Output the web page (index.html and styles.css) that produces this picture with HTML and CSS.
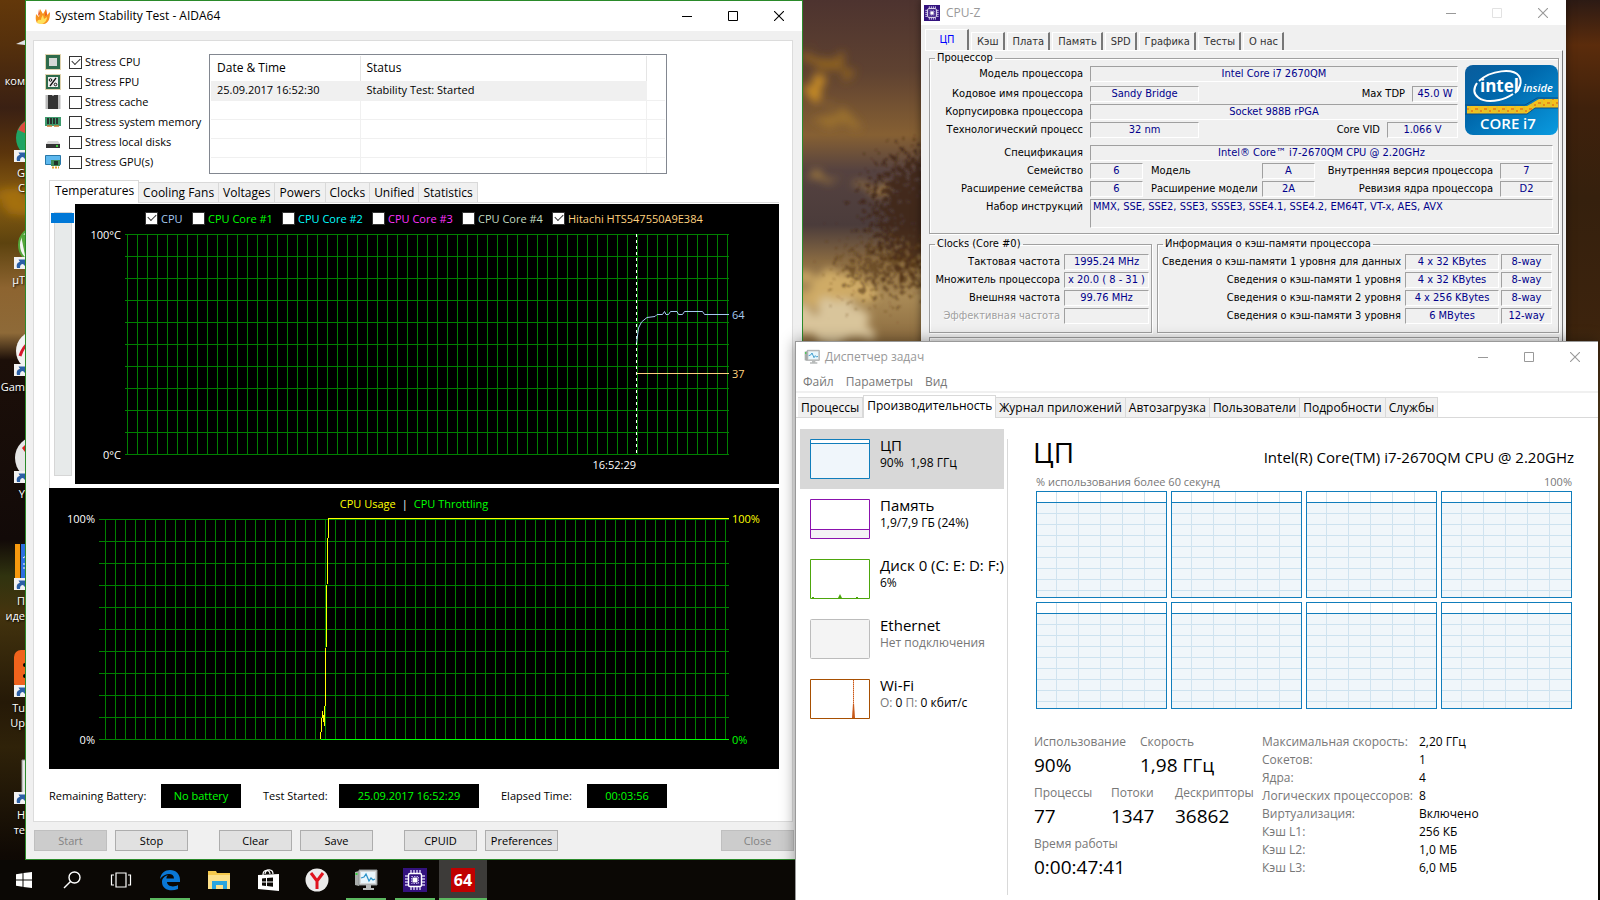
FILE: index.html
```html
<!DOCTYPE html>
<html lang="ru">

<head>
     <meta charset="UTF-8">
     <meta name="viewport" content="width=device-width, initial-scale=1.0">
     <title>Desktop</title>
     <link rel="stylesheet" href="styles.css">
</head>

<body>
     <svg width="0" height="0" class="defs">
          <symbol id="minimize" viewBox="0 0 10 10"><path d="M0 5.5h10" stroke="currentColor" shape-rendering="crispEdges"/></symbol>
          <symbol id="maximize" viewBox="0 0 10 10"><path d="M.5.5h9v9h-9z" fill="none" stroke="currentColor"/></symbol>
          <symbol id="close" viewBox="0 0 10 10"><path d="M0 0l10 10M10 0L0 10" stroke="currentColor" stroke-width="1.1"/></symbol>
          <symbol id="shortcut" viewBox="0 0 12 12">
               <path d="M0 0h12v12H0z" fill="#f2f2f2"/>
               <path d="M3 11c-1-4 1-6 3-6L4.500 2.500h6.500V9L9 7c-2 0-3 1-3 4z" fill="#2b5fa5"/>
          </symbol>
          <symbol id="chip" viewBox="0 0 24 24">
               <path d="M0 0h24v24H0z" fill="#33127e"/>
               <path d="M8 2v3M11 2v3M14 2v3M17 2v3M8 19v3M11 19v3M14 19v3M17 19v3M2 8h3M2 11h3M2 14h3M2 17h3M19 8h3M19 11h3M19 14h3M19 17h3" stroke="#cfc4ee" stroke-width="1.500"/>
               <rect x="5.500" y="5.500" width="13" height="13" rx="1.500" fill="#33127e" stroke="#fff" stroke-width="1.400"/>
               <path d="M8.500 8.500h7v7h-7z" fill="none" stroke="#b9a9e6" stroke-dasharray="1.500 1"/>
               <path d="M9.500 9.500h5v5h-5z" fill="#fff"/>
          </symbol>
          <symbol id="monitor" viewBox="0 0 24 24">
               <path d="M1 4l4-1v15l-4-1z" fill="#a9adab"/>
               <path d="M1.500 6h2" stroke="#35d03c" stroke-width="2"/>
               <path d="M5 2h18v15H5z" fill="#d5d8d8" stroke="#8c9192"/>
               <path d="M7 4h14v11H7z" fill="#e9f7fd"/>
               <path d="M7 10l3-1 2-3 3 7 2-3 2 2 2-1" fill="none" stroke="#2c93c9" stroke-width="1.300"/>
               <path d="M12 17h5v3h3v2H9v-2h3z" fill="#b8bbbb"/>
          </symbol>
     </svg>

     <div class="desktop">
          <svg class="wallpaper" viewBox="0 0 1600 900" preserveAspectRatio="none" aria-hidden="true">
               <defs>
                    <linearGradient id="skyLeft" x2="0" y2="1">
                         <stop offset="0" stop-color="#63380a"/>
                         <stop offset=".05" stop-color="#55300c"/>
                         <stop offset=".12" stop-color="#3a2013"/>
                         <stop offset=".17" stop-color="#5b350c"/>
                         <stop offset=".22" stop-color="#8a5e10"/>
                         <stop offset=".27" stop-color="#5d430f"/>
                         <stop offset=".32" stop-color="#8d6430"/>
                         <stop offset=".37" stop-color="#8e6a38"/>
                         <stop offset=".4" stop-color="#1c0f09"/>
                         <stop offset=".6" stop-color="#120a08"/>
                         <stop offset=".64" stop-color="#30330f"/>
                         <stop offset=".68" stop-color="#44340e"/>
                         <stop offset=".78" stop-color="#251907"/>
                         <stop offset=".83" stop-color="#2f2209"/>
                         <stop offset=".95" stop-color="#0f0904"/>
                         <stop offset="1" stop-color="#080503"/>
                    </linearGradient>
                    <linearGradient id="skyMiddle" x2="0" y2="1">
                         <stop offset="0" stop-color="#4d332f"/>
                         <stop offset=".08" stop-color="#5f4231"/>
                         <stop offset=".15" stop-color="#866033"/>
                         <stop offset=".19" stop-color="#554240"/>
                         <stop offset=".25" stop-color="#4b3c3b"/>
                         <stop offset=".29" stop-color="#8a6b42"/>
                         <stop offset=".33" stop-color="#a98a56"/>
                         <stop offset=".38" stop-color="#8a6a3e"/>
                         <stop offset=".6" stop-color="#20160a"/>
                         <stop offset="1" stop-color="#080503"/>
                    </linearGradient>
                    <linearGradient id="skyRight" x2="0" y2="1">
                         <stop offset="0" stop-color="#2c1a14"/>
                         <stop offset=".05" stop-color="#5b2c0c"/>
                         <stop offset=".12" stop-color="#3f210c"/>
                         <stop offset=".22" stop-color="#35200d"/>
                         <stop offset=".36" stop-color="#3c230d"/>
                         <stop offset=".5" stop-color="#5c4520"/>
                         <stop offset=".7" stop-color="#2a1c0c"/>
                         <stop offset="1" stop-color="#080503"/>
                    </linearGradient>
                    <filter id="cloud" x="-20%" y="-20%" width="140%" height="140%">
                         <feTurbulence type="fractalNoise" baseFrequency=".05" numOctaves="4" seed="4"/>
                         <feDisplacementMap in="SourceGraphic" scale="36"/>
                         <feGaussianBlur stdDeviation="4"/>
                    </filter>
                    <filter id="leaves" x="-40%" y="-40%" width="180%" height="180%">
                         <feTurbulence type="fractalNoise" baseFrequency=".18" numOctaves="4" seed="8" result="noise"/>
                         <feDisplacementMap in="SourceGraphic" in2="noise" scale="120" xChannelSelector="R" yChannelSelector="G"/>
                         <feGaussianBlur stdDeviation=".8"/>
                    </filter>
               </defs>
               <rect width="400" height="900" fill="url(#skyLeft)"/>
               <rect x="400" width="900" height="900" fill="url(#skyMiddle)"/>
               <rect x="1300" width="300" height="900" fill="url(#skyRight)"/>
               <g filter="url(#cloud)">
                    <ellipse cx="830" cy="62" rx="22" ry="10" fill="#8c6024"/>
                    <ellipse cx="818" cy="88" rx="14" ry="12" fill="#c58a25"/>
                    <ellipse cx="832" cy="118" rx="22" ry="8" fill="#9a702f"/>
                    <ellipse cx="872" cy="186" rx="18" ry="3" fill="#c39443"/>
                    <ellipse cx="820" cy="176" rx="18" ry="3" fill="#a37b3c"/>
                    <ellipse cx="832" cy="288" rx="40" ry="16" fill="#cfab66"/>
                    <ellipse cx="832" cy="322" rx="40" ry="20" fill="#d9c59b"/>
                    <ellipse cx="14" cy="200" rx="14" ry="12" fill="#a4700f"/>
               </g>
               <g filter="url(#leaves)">
                    <ellipse cx="918" cy="212" rx="40" ry="56" fill="#3c2210" opacity=".75"/>
                    <ellipse cx="890" cy="268" rx="44" ry="16" fill="#553516" opacity=".6"/>
               </g>
          </svg>

          <div class="shortcuts">
               <a href="#" class="shortcut">
                    <svg viewBox="0 0 48 42"><path d="M16 31l9-4v5z" fill="#dfe3e6"/></svg>
                    <span><br>ком</span>
               </a>
               <a href="#" class="shortcut">
                    <svg viewBox="0 0 48 42"><circle cx="36" cy="18" r="20" fill="#1fa463"/><path d="M18 10a20 20 0 0 1 18-12v20z" fill="#dd4b3e"/><use href="#shortcut" x="14" y="30" width="12" height="12"/></svg>
                    <span>G<br>C</span>
               </a>
               <a href="#" class="shortcut">
                    <svg viewBox="0 0 48 42"><circle cx="37" cy="18" r="18" fill="#f4f4f4" stroke="#55a53a" stroke-width="2"/><path d="M23 8l4 20" stroke="#55a53a" stroke-width="4"/><use href="#shortcut" x="14" y="30" width="12" height="12"/></svg>
                    <span>µT</span>
               </a>
               <a href="#" class="shortcut">
                    <svg viewBox="0 0 48 42"><circle cx="36" cy="17" r="20" fill="#f2f2f2"/><path d="M20 22c2-6 4-10 8-12" stroke="#d6182c" stroke-width="3" fill="none"/><use href="#shortcut" x="14" y="30" width="12" height="12"/></svg>
                    <span>Gam</span>
               </a>
               <a href="#" class="shortcut">
                    <svg viewBox="0 0 48 42"><circle cx="37" cy="17" r="22" fill="#e6e6e6"/><path d="M22 7l3-3v7z" fill="#d81e1e"/><use href="#shortcut" x="14" y="30" width="12" height="12"/></svg>
                    <span>Y</span>
               </a>
               <a href="#" class="shortcut">
                    <svg viewBox="0 0 48 42"><path d="M15-4h5v34h-5z" fill="#f79a0e"/><path d="M21-4h10v34H21z" fill="#2d6fe0"/><path d="M23 10l3-2M23 16h3M23 20h3" stroke="#fff"/><use href="#shortcut" x="14" y="30" width="12" height="12"/></svg>
                    <span>П<br>иде</span>
               </a>
               <a href="#" class="shortcut">
                    <svg viewBox="0 0 48 42"><rect x="14" y="-5" width="40" height="40" rx="7" fill="#f0631c"/><circle cx="25" cy="10" r="2"/><circle cx="25" cy="21" r="2"/><use href="#shortcut" x="14" y="30" width="12" height="12"/></svg>
                    <span>Tu<br>Up</span>
               </a>
               <a href="#" class="shortcut">
                    <svg viewBox="0 0 48 42"><path d="M22-2h20v34H22z" fill="#e5e5e5" stroke="#999"/><use href="#shortcut" x="14" y="30" width="12" height="12"/></svg>
                    <span>Н<br>те</span>
               </a>
          </div>

          <!-- AIDA64 -->
          <div class="window aida" lang="en">
               <div class="titlebar">
                    <svg class="titleIcon" viewBox="0 0 16 16">
                         <path d="M2 15C0 11 1 8 1 6l3 3 1-8 3 5 3-5 1 6 3-3c0 6-1 11-6 12z" fill="#f7931e"/>
                         <path d="M2 15c0-3 2-4 4-3 0-2 1-4 2-5l1 4 3-2c0 4-3 7-6 7z" fill="#ffe05a"/>
                         <path d="M4 1l1 5-2 2zM11 1l1 6-2 1z" fill="#e8541e"/>
                    </svg>
                    <h1>System Stability Test - AIDA64</h1>
                    <div class="caption">
                         <button aria-label="Minimize"><svg><use href="#minimize"/></svg></button>
                         <button aria-label="Maximize"><svg><use href="#maximize"/></svg></button>
                         <button aria-label="Close window"><svg><use href="#close"/></svg></button>
                    </div>
               </div>
               <div class="panel">
                    <div class="topRow">
                         <div class="stressList">
                              <label>
                                   <svg viewBox="0 0 16 16"><path d="M.5.5h15v15H.5z" fill="none" stroke="#c0a860" stroke-dasharray="1 1"/><path d="M1 1h14v14H1z" fill="#2e6b4b"/><path d="M4 4h8v8H4z" fill="#d5d8d5"/></svg>
                                   <input type="checkbox" checked>Stress CPU
                              </label>
                              <label>
                                   <svg viewBox="0 0 16 16"><path d="M.5.5h15v15H.5z" fill="none" stroke="#c0a860" stroke-dasharray="1 1"/><path d="M1 1h14v14H1z" fill="#2e6b4b"/><path d="M3 3h10v10H3z" fill="#eee"/><path d="M11 4l-6 8" stroke="#111" stroke-width="1.300"/><circle cx="5.500" cy="6" r="1.300" fill="none" stroke="#111"/><circle cx="10.500" cy="10.500" r="1.300" fill="none" stroke="#111"/></svg>
                                   <input type="checkbox">Stress FPU
                              </label>
                              <label>
                                   <svg viewBox="0 0 16 16"><path d="M2 1.500v14M14 1.500v14" stroke="#777" stroke-width="3" stroke-dasharray="1 1"/><path d="M3 1h4l1 1 1-1h4v14H3z" fill="#333"/></svg>
                                   <input type="checkbox">Stress cache
                              </label>
                              <label>
                                   <svg viewBox="0 0 16 16"><path d="M0 3h16v9H0z" fill="#3f9a6d"/><path d="M2 4h2v6H2zM5 4h2v6H5zM8 4h2v6H8zM11 4h2v6h-2z" fill="#29332e"/><path d="M2 12h5M9 12h5" stroke="#c97b35" stroke-width="1.500"/></svg>
                                   <input type="checkbox">Stress system memory
                              </label>
                              <label>
                                   <svg viewBox="0 0 16 16"><path d="M3 7h10l2 3H1z" fill="#d6d6d6"/><path d="M1 10h14v4H1z" fill="#333"/><circle cx="12" cy="12" r="1" fill="#4f4"/></svg>
                                   <input type="checkbox">Stress local disks
                              </label>
                              <label>
                                   <svg viewBox="0 0 16 16"><path d="M.5 1.500h15v9H.5z" fill="#5db8ee" stroke="#2877a8"/><path d="M6 6h9v6H6z" fill="#3d8a5a"/><path d="M9 7h4v4H9z" fill="#1f3328"/><path d="M7 13.500h7" stroke="#e0a030" stroke-width="2" stroke-dasharray="2 1"/></svg>
                                   <input type="checkbox">Stress GPU(s)
                              </label>
                         </div>
                         <div class="logBox">
                              <table class="log">
                                   <thead>
                                        <tr><th class="date">Date &amp; Time</th><th class="state">Status</th><th></th></tr>
                                   </thead>
                                   <tbody>
                                        <tr class="selected"><td>25.09.2017 16:52:30</td><td>Stability Test: Started</td><td></td></tr>
                                        <tr><td></td><td></td><td></td></tr>
                                        <tr><td></td><td></td><td></td></tr>
                                        <tr><td></td><td></td><td></td></tr>
                                        <tr><td></td><td></td><td></td></tr>
                                   </tbody>
                              </table>
                         </div>
                    </div>

                    <div class="tabs">
                         <button class="tab active">Temperatures</button>
                         <button class="tab">Cooling Fans</button>
                         <button class="tab">Voltages</button>
                         <button class="tab">Powers</button>
                         <button class="tab">Clocks</button>
                         <button class="tab">Unified</button>
                         <button class="tab">Statistics</button>
                    </div>

                    <div class="pane">
                         <input class="scale" type="range" min="0" max="100" value="0" aria-label="Scale">
                         <div class="chart">
                              <div class="legend">
                                   <label class="c1"><input type="checkbox" checked>CPU</label>
                                   <label class="c2"><input type="checkbox">CPU Core #1</label>
                                   <label class="c3"><input type="checkbox">CPU Core #2</label>
                                   <label class="c4"><input type="checkbox">CPU Core #3</label>
                                   <label class="c5"><input type="checkbox">CPU Core #4</label>
                                   <label class="c6"><input type="checkbox" checked>Hitachi HTS547550A9E384</label>
                              </div>
                              <svg viewBox="0 0 704 256">
                                   <defs>
                                        <pattern id="tempGrid" x="52" y="6" width="10" height="22" patternUnits="userSpaceOnUse">
                                             <path d="M0 0h10v1H1v21H0z" fill="#008000"/>
                                        </pattern>
                                   </defs>
                                   <rect x="50" y="6" width="604" height="221" fill="url(#tempGrid)" shape-rendering="crispEdges"/>
                                   <path d="M561.500 6v220" stroke="#fff" stroke-dasharray="3 3"/>
                                   <polyline points="561.500,115 563.500,100 566.500,94 572,89.500 580,88.500 582,86.500 587.500,86.500 589.500,83.500 591,86.500 593.500,86.500 595.500,83.500 602,83.500 603.500,86.500 607.500,86.500 609.500,83.500 627.500,83.500 629.500,86.500 654,86.500" fill="none" stroke="#a6caf0"/>
                                   <path d="M562 145.500h92" stroke="#ffd27f"/>
                                   <text x="46" y="11" text-anchor="end">100°C</text>
                                   <text x="46" y="231" text-anchor="end">0°C</text>
                                   <text x="561" y="241" text-anchor="end">16:52:29</text>
                                   <text x="657" y="91" class="c1">64</text>
                                   <text x="657" y="150" class="c6">37</text>
                              </svg>
                         </div>
                    </div>

                    <div class="chart usage">
                         <p class="usageLegend"><span class="yellow">CPU Usage</span><span>|</span><span class="green">CPU Throttling</span></p>
                         <svg viewBox="0 0 730 259">
                              <defs>
                                   <pattern id="usageGrid" x="56" y="9" width="10" height="22" patternUnits="userSpaceOnUse">
                                        <path d="M0 0h10v1H1v21H0z" fill="#008000"/>
                                   </pattern>
                              </defs>
                              <rect x="50" y="9" width="630" height="221" fill="url(#usageGrid)" shape-rendering="crispEdges"/>
                              <path d="M272 229.500h408" stroke="#0f0"/>
                              <polyline points="271.500,229 273.500,201 275.500,216 276.500,177 277.500,101 278.500,49 279.500,8.500 680,8.500" fill="none" stroke="#ff0" shape-rendering="crispEdges"/>
                              <text x="46" y="13" text-anchor="end">100%</text>
                              <text x="46" y="234" text-anchor="end">0%</text>
                              <text x="683" y="13" class="yellow">100%</text>
                              <text x="683" y="234" class="green">0%</text>
                         </svg>
                    </div>

                    <div class="statusRow">
                         <span>Remaining Battery:</span>
                         <output>No battery</output>
                         <span>Test Started:</span>
                         <output>25.09.2017 16:52:29</output>
                         <span>Elapsed Time:</span>
                         <output>00:03:56</output>
                    </div>
               </div>
               <div class="buttons">
                    <button disabled>Start</button>
                    <button>Stop</button>
                    <button class="group">Clear</button>
                    <button>Save</button>
                    <button class="group">CPUID</button>
                    <button>Preferences</button>
                    <button class="last" disabled>Close</button>
               </div>
          </div>

          <!-- CPU-Z -->
          <div class="window cpuz">
               <div class="titlebar">
                    <svg class="titleIcon"><use href="#chip"/></svg>
                    <h1>CPU-Z</h1>
                    <div class="caption">
                         <button aria-label="Свернуть"><svg><use href="#minimize"/></svg></button>
                         <button aria-label="Развернуть" disabled><svg><use href="#maximize"/></svg></button>
                         <button aria-label="Закрыть"><svg><use href="#close"/></svg></button>
                    </div>
               </div>
               <div class="zTabs">
                    <button class="zTab active">ЦП</button>
                    <button class="zTab">Кэш</button>
                    <button class="zTab">Плата</button>
                    <button class="zTab">Память</button>
                    <button class="zTab">SPD</button>
                    <button class="zTab">Графика</button>
                    <button class="zTab">Тесты</button>
                    <button class="zTab">О нас</button>
               </div>
               <div class="zPage">
                    <fieldset class="processor">
                         <legend>Процессор</legend>
                         <div class="model">
                              <div class="modelRows">
                                   <div class="row"><span class="name">Модель процессора</span><span class="field grow">Intel Core i7 2670QM</span></div>
                                   <div class="row"><span class="name">Кодовое имя процессора</span><span class="field mid">Sandy Bridge</span><span class="name grow">Max TDP</span><span class="field tdp">45.0 W</span></div>
                                   <div class="row"><span class="name">Корпусировка процессора</span><span class="field grow">Socket 988B rPGA</span></div>
                                   <div class="row"><span class="name">Технологический процесс</span><span class="field mid">32 nm</span><span class="name grow">Core VID</span><span class="field vid">1.066 V</span></div>
                              </div>
                              <svg class="intel" viewBox="0 0 93 70">
                                   <defs>
                                        <linearGradient id="blue" x2="1" y2="1"><stop offset="0" stop-color="#0a5c9c"/><stop offset=".4" stop-color="#0068ac"/><stop offset="1" stop-color="#0a9be0"/></linearGradient>
                                        <pattern id="die" width="9" height="6" patternUnits="userSpaceOnUse"><path d="M0 0h9v6H0z" fill="#f5c21c"/><path d="M1 1h3v2H1zM6 3h2v2H6z" fill="#e58a1a"/><path d="M5 0v6M0 4h4" stroke="#b7bd4a" stroke-width=".6"/></pattern>
                                   </defs>
                                   <rect width="93" height="70" rx="8" fill="url(#blue)"/>
                                   <path d="M2 41h60l12-7h19v9H70l-8 6H2z" fill="url(#die)"/>
                                   <path d="M0 40h60l12-7h21M0 49h62l8-6h23" fill="none" stroke="#0a4f86"/>
                                   <path d="M14 16C26 5 48 3 54 11c4 6 0 14-4 17M12 18C4 30 16 39 34 35c6-1 11-4 14-6" fill="none" stroke="#fff" stroke-width="2"/>
                                   <text x="15" y="27" class="intelName">intel</text>
                                   <text x="58" y="27" class="intelInside">inside</text>
                                   <text x="15" y="64" class="intelCore">CORE</text>
                                   <text x="58" y="64" class="intelCore">i7</text>
                              </svg>
                         </div>
                         <div class="row"><span class="name">Спецификация</span><span class="field grow">Intel® Core™ i7-2670QM CPU @ 2.20GHz</span></div>
                         <div class="row"><span class="name">Семейство</span><span class="field num">6</span><span class="name left">Модель</span><span class="field num">A</span><span class="name grow">Внутренняя версия процессора</span><span class="field num">7</span></div>
                         <div class="row"><span class="name">Расширение семейства</span><span class="field num">6</span><span class="name left">Расширение модели</span><span class="field num">2A</span><span class="name grow">Ревизия ядра процессора</span><span class="field num">D2</span></div>
                         <div class="row"><span class="name">Набор инструкций</span><span class="field grow tall">MMX, SSE, SSE2, SSE3, SSSE3, SSE4.1, SSE4.2, EM64T, VT-x, AES, AVX</span></div>
                    </fieldset>
                    <div class="halves">
                         <fieldset class="clocks">
                              <legend>Clocks (Core #0)</legend>
                              <div class="row"><span class="name grow">Тактовая частота</span><span class="field">1995.24 MHz</span></div>
                              <div class="row"><span class="name grow">Множитель процессора</span><span class="field">x 20.0 ( 8 - 31 )</span></div>
                              <div class="row"><span class="name grow">Внешняя частота</span><span class="field">99.76 MHz</span></div>
                              <div class="row"><span class="name grow off">Эффективная частота</span><span class="field"></span></div>
                         </fieldset>
                         <fieldset class="cache">
                              <legend>Информация о кэш-памяти процессора</legend>
                              <div class="row"><span class="name grow">Сведения о кэш-памяти 1 уровня для данных</span><span class="field size">4 x 32 KBytes</span><span class="field way">8-way</span></div>
                              <div class="row"><span class="name grow">Сведения о кэш-памяти 1 уровня</span><span class="field size">4 x 32 KBytes</span><span class="field way">8-way</span></div>
                              <div class="row"><span class="name grow">Сведения о кэш-памяти 2 уровня</span><span class="field size">4 x 256 KBytes</span><span class="field way">8-way</span></div>
                              <div class="row"><span class="name grow">Сведения о кэш-памяти 3 уровня</span><span class="field size">6 MBytes</span><span class="field way">12-way</span></div>
                         </fieldset>
                    </div>
                    <fieldset class="footerBox"></fieldset>
               </div>
          </div>

          <!-- Task manager -->
          <div class="window taskmgr">
               <div class="titlebar">
                    <svg class="titleIcon"><use href="#monitor"/></svg>
                    <h1>Диспетчер задач</h1>
                    <div class="caption">
                         <button aria-label="Свернуть"><svg><use href="#minimize"/></svg></button>
                         <button aria-label="Развернуть"><svg><use href="#maximize"/></svg></button>
                         <button aria-label="Закрыть"><svg><use href="#close"/></svg></button>
                    </div>
               </div>
               <div class="menu">
                    <button>Файл</button>
                    <button>Параметры</button>
                    <button>Вид</button>
               </div>
               <div class="tabs">
                    <button class="tab">Процессы</button>
                    <button class="tab active">Производительность</button>
                    <button class="tab">Журнал приложений</button>
                    <button class="tab">Автозагрузка</button>
                    <button class="tab">Пользователи</button>
                    <button class="tab">Подробности</button>
                    <button class="tab">Службы</button>
               </div>
               <div class="perf">
                    <div class="devices">
                         <button class="device selected">
                              <svg viewBox="0 0 60 40"><path d="M.5.5h59v39H.5z" fill="#fff"/><path d="M.5 4.500h59v35H.5z" fill="#f0f6fb"/><path d="M.5.5h59v39H.5zM0 4.500h60" fill="none" stroke="#117dbb"/></svg>
                              <span><b>ЦП</b><small>90%&nbsp; 1,98 ГГц</small></span>
                         </button>
                         <button class="device">
                              <svg viewBox="0 0 60 40"><path d="M1 30h58v9H1z" fill="#f4f2f5"/><path d="M.5.5h59v39H.5zM0 30.500h60" fill="none" stroke="#8b12ae"/></svg>
                              <span><b>Память</b><small>1,9/7,9 ГБ (24%)</small></span>
                         </button>
                         <button class="device">
                              <svg viewBox="0 0 60 40"><path d="M28 39l2-4 2 4zM2 39v-1h2v1zM46 39v-1h2v1z" fill="#4da60c"/><path d="M.5.5h59v39H.5z" fill="none" stroke="#4da60c"/></svg>
                              <span><b>Диск 0 (C: E: D: F:)</b><small>6%</small></span>
                         </button>
                         <button class="device">
                              <svg viewBox="0 0 60 40"><rect x=".5" y=".5" width="59" height="39" rx="1" fill="#f4f4f4" stroke="#bcbcbc"/></svg>
                              <span><b>Ethernet</b><small class="gray">Нет подключения</small></span>
                         </button>
                         <button class="device">
                              <svg viewBox="0 0 60 40"><path d="M42 39l1-15h1l1 15z" fill="#c85a1a"/><path d="M43.500 1v24" stroke="#e8a07a"/><path d="M43.500 1v24" stroke="#c85a1a" stroke-dasharray="1 1"/><path d="M.5.5h59v39H.5z" fill="none" stroke="#a74f01"/></svg>
                              <span><b>Wi-Fi</b><small><i>О:</i> 0 <i>П:</i> 0 кбит/с</small></span>
                         </button>
                    </div>
                    <div class="details">
                         <div class="detailsHead">
                              <h2>ЦП</h2>
                              <p>Intel(R) Core(TM) i7-2670QM CPU @ 2.20GHz</p>
                         </div>
                         <div class="axis"><span>% использования более 60 секунд</span><span>100%</span></div>
                         <div class="cores">
                              <div class="core"></div>
                              <div class="core"></div>
                              <div class="core"></div>
                              <div class="core"></div>
                              <div class="core"></div>
                              <div class="core"></div>
                              <div class="core"></div>
                              <div class="core"></div>
                         </div>
                         <div class="stats">
                              <div class="bigStats">
                                   <div class="statLine two">
                                        <p><span>Использование</span><strong>90%</strong></p>
                                        <p><span>Скорость</span><strong>1,98 ГГц</strong></p>
                                   </div>
                                   <div class="statLine three">
                                        <p><span>Процессы</span><strong>77</strong></p>
                                        <p><span>Потоки</span><strong>1347</strong></p>
                                        <p><span>Дескрипторы</span><strong>36862</strong></p>
                                   </div>
                                   <div class="statLine">
                                        <p><span>Время работы</span><strong>0:00:47:41</strong></p>
                                   </div>
                              </div>
                              <dl>
                                   <dt>Максимальная скорость:</dt><dd>2,20 ГГц</dd>
                                   <dt>Сокетов:</dt><dd>1</dd>
                                   <dt>Ядра:</dt><dd>4</dd>
                                   <dt>Логических процессоров:</dt><dd>8</dd>
                                   <dt>Виртуализация:</dt><dd>Включено</dd>
                                   <dt>Кэш L1:</dt><dd>256 КБ</dd>
                                   <dt>Кэш L2:</dt><dd>1,0 МБ</dd>
                                   <dt>Кэш L3:</dt><dd>6,0 МБ</dd>
                              </dl>
                         </div>
                    </div>
               </div>
          </div>

          <div class="taskbar">
               <button class="narrow" aria-label="Пуск"><svg viewBox="0 0 24 24"><path d="M4 6.200l6.500-.9v6.200H4zM11.500 5.100L20 4v7.500h-8.500zM4 12.500h6.500v6.200L4 17.800zM11.500 12.500H20V20l-8.500-1.100z" fill="#fff"/></svg></button>
               <button class="narrow" aria-label="Поиск"><svg viewBox="0 0 24 24" fill="none" stroke="#fff" stroke-width="1.400"><circle cx="14.500" cy="9.500" r="5.500"/><path d="M10.500 13.500L4 20"/></svg></button>
               <button aria-label="Представление задач"><svg viewBox="0 0 24 24" fill="none" stroke="#fff" stroke-width="1.200"><path d="M7 5h10v14H7zM5 7H2.500v10H5M19 7h2.500v10H19"/></svg></button>
               <button aria-label="Edge" class="open"><svg viewBox="0 0 24 24"><path d="M2 11C3 5 7 2 12 2c6 0 10 4 10 10v2H9c0 4 6 6 11 3v4c-7 3-16 1-16-7 0-4 3-6 6-7-1 1-1.500 2-1.600 3.500H16c0-6-9-6-14 .5z" fill="#0a78d6"/></svg></button>
               <button aria-label="Проводник"><svg viewBox="0 0 24 24"><path d="M1 3h8l1 2h13v16H1z" fill="#f5c84c"/><path d="M1 7h22v14H1z" fill="#fde08a"/><path d="M5 21v-8h15v8h-4v-4H9v4z" fill="#2aa5e0"/></svg></button>
               <button aria-label="Магазин"><svg viewBox="0 0 24 24"><path d="M2 7l21-1v17L2 21z" fill="#fff"/><path d="M7 7c0-6 7-6 7-1M9 6c1-6 8-5 8 0" fill="none" stroke="#fff" stroke-width="1.200"/><path d="M6 10.500l4-.4v3.400H6zM11 10l6-.5v4h-6zM6 14.500h4V18l-4-.4zM11 14.500h6v4.200l-6-.6z" fill="#0c0906"/></svg></button>
               <button aria-label="Яндекс"><svg viewBox="0 0 24 24"><circle cx="12" cy="12" r="11.500" fill="#ebebeb"/><path d="M6 5l6 8 6-8M12 12v9" fill="none" stroke="#e0141e" stroke-width="3"/></svg></button>
               <button aria-label="Диспетчер задач" class="open"><svg><use href="#monitor"/></svg></button>
               <button aria-label="CPU-Z" class="open"><svg><use href="#chip"/></svg></button>
               <button aria-label="AIDA64" class="open current"><svg viewBox="0 0 24 24"><path d="M0 0h24v24H0z" fill="#c00000"/><text x="12" y="18" text-anchor="middle" class="badge64">64</text></svg></button>
          </div>
     </div>
</body>

</html>
```

FILE: styles.css
```css
* {
     margin: 0px;
     padding: 0px;
     box-sizing: border-box;
}

body {
     font-family: "Open Sans", "Noto Sans", sans-serif;
     font-size: 12px;
     line-height: 16px;
     color: #000;
}

button, input {
     font: inherit;
     color: inherit;
}

button {
     border: none;
     background: none;
     white-space: nowrap;
}

.defs {
     position: absolute;
}

.desktop {
     position: relative;
     width: 100%;
     height: 100vh;
     overflow: hidden;
     background-color: #120b06;
}

.wallpaper {
     display: block;
     width: 100%;
     height: 100%;
}

/* desktop shortcuts */
.shortcuts {
     position: absolute;
     left: 0px;
     top: 13px;
     display: grid;
     grid-template-columns: 25px;
     grid-auto-rows: 107px;
}

.shortcut {
     color: #fff;
     font-size: 11px;
     text-decoration: none;
     text-align: right;
     text-shadow: 1px 1px 2px #000;

     svg {
          display: block;
          width: 48px;
          height: 42px;
          margin-bottom: 3px;
          overflow: visible;
     }

     span {
          display: block;
          line-height: 15px;
     }
}

/* windows */
.window {
     position: absolute;
     display: flex;
     flex-direction: column;
}

.titlebar {
     display: flex;
     align-items: center;
     background-color: #fff;
     flex: none;

     h1 {
          flex: 1;
          font-size: 12px;
          font-weight: 400;
     }
}

.titleIcon {
     width: 16px;
     height: 16px;
     margin-right: 5px;
}

.caption {
     display: flex;
     height: 100%;

     button {
          width: 46px;
          display: flex;
          align-items: center;
          justify-content: center;
     }

     svg {
          width: 10px;
          height: 10px;
     }
}

.tabs {
     display: flex;
     align-items: flex-end;
}

.tab {
     height: 20px;
     padding: 0px 4px;
     background-color: #f0f0f0;
     border: 1px solid #d9d9d9;
     border-width: 1px 1px 0px 0px;

     &.active {
          height: 23px;
          padding-bottom: 2px;
          background-color: #fff;
          border-left-width: 1px;
          margin-bottom: -1px;
     }
}

input[type=checkbox] {
     appearance: none;
     position: relative;
     flex: none;
     width: 13px;
     height: 13px;
     border: 1px solid #333;
     background-color: #fff;
}

input[type=checkbox]:checked::after {
     content: "";
     position: absolute;
     left: 2px;
     top: 1px;
     width: 7px;
     height: 4px;
     border: solid #333;
     border-width: 0px 0px 1px 1px;
     transform: rotate(-45deg);
}

/* aida */
.aida {
     left: 25px;
     top: 0px;
     bottom: 40px;
     width: 778px;
     background-color: #f0f0f0;
     border: 1px solid #2a8a2a;

     .titlebar {
          height: 30px;
          padding-left: 9px;
     }

     .titleIcon {
          margin-right: 4px;
     }

     .panel {
          flex: 1;
          margin: 9px 9px 0px 7px;
          padding-left: 15px;
          background-color: #fff;
          border: 1px solid #dcdcdc;
     }
}

.topRow {
     display: flex;
     margin-left: -4px;
     padding-top: 11px;
}

.stressList {
     width: 164px;
     font-size: 11px;

     label {
          display: flex;
          align-items: center;
          height: 20px;
          white-space: nowrap;
     }

     svg {
          flex: none;
          width: 16px;
          height: 16px;
          margin-right: 8px;
     }

     input {
          margin-right: 3px;
     }
}

.logBox {
     width: 458px;
     height: 120px;
     margin-top: 2px;
     padding: 1px;
     border: 1px solid #828790;
     overflow: hidden;
}

.log {
     width: 100%;
     table-layout: fixed;
     border-collapse: collapse;

     th {
          height: 25px;
          padding: 0px 0px 2px 6px;
          text-align: left;
          font-weight: 400;
          border-right: 1px solid #e5e5e5;
     }

     .date {
          width: 149px;
     }

     .state {
          width: 286px;
     }

     td {
          height: 19px;
          padding-left: 6px;
          font-size: 11px;
          line-height: 18px;
          border-right: 1px solid #f0f0f0;
          border-bottom: 1px solid #f0f0f0;
     }

     th:last-child, td:last-child {
          border-right: none;
     }

     .selected td:not(:last-child) {
          background-color: #f0f0f0;
     }
}

.aida .tabs {
     margin-top: 6px;
     height: 22px;

     .active {
          padding-left: 5px;
     }
}

.pane {
     display: flex;
     width: 730px;
     height: 286px;
     padding: 1px 0px 4px 1px;
     border: 1px solid #dcdcdc;
     border-width: 1px 0px 0px 1px;
}

.scale {
     appearance: none;
     writing-mode: vertical-lr;
     width: 24px;
     height: 264px;
     margin: 8px 0px 0px 0px;
     background: none;

     &::-webkit-slider-runnable-track {
          width: 18px;
          background-color: #e7eaea;
          border: 1px solid #d6d6d6;
     }

     &::-webkit-slider-thumb {
          appearance: none;
          width: 23px;
          height: 10px;
          margin-left: -4px;
          background-color: #0078d7;
     }
}

.chart {
     flex: 1;
     background-color: #000;
     color: #fff;

     svg {
          display: block;
          width: 100%;
          height: auto;
     }

     text {
          fill: currentColor;
          font-size: 11px;
     }
}

.legend {
     display: grid;
     grid-template-columns: 47px repeat(4, 90px) auto;
     height: 24px;
     padding: 8px 0px 0px 70px;
     font-size: 11px;

     label {
          display: flex;
          align-items: center;
          gap: 3px;
          height: 13px;
          white-space: nowrap;
     }
}

.c1 { color: #a6caf0; }
.c2 { color: #00ff00; }
.c3 { color: #00ffff; }
.c4 { color: #ff33ff; }
.c5 { color: #c0dcc0; }
.c6 { color: #ffd27f; }
.yellow { color: #ffff00; }
.green { color: #00ff00; }

.usage {
     width: 730px;
}

.usageLegend {
     display: flex;
     justify-content: center;
     gap: 6px;
     height: 22px;
     padding-top: 8px;
     font-size: 11px;
}

.statusRow {
     display: grid;
     grid-template-columns: 112px 80px 98px 140px 108px 80px;
     align-items: center;
     margin-top: 15px;
     font-size: 11px;

     output {
          height: 24px;
          background-color: #000;
          color: #00ff00;
          line-height: 24px;
          text-align: center;
     }

     span:not(:first-child) {
          padding-left: 22px;
     }
}

.buttons {
     display: flex;
     gap: 8px;
     margin: 8px;
     font-size: 11px;

     button {
          width: 73px;
          height: 21px;
          background-color: #e1e1e1;
          border: 1px solid #adadad;
     }

     button:disabled {
          color: #838383;
          background-color: #cccccc;
          border-color: #bfbfbf;
     }

     .group {
          margin-left: 23px;
     }

     .last {
          margin-left: auto;
     }
}

/* cpu-z */
.cpuz {
     left: 921px;
     top: 0px;
     width: 645px;
     height: 400px;
     background-color: #f0f0f0;
     box-shadow: 0px 0px 8px rgba(0, 0, 0, 0.5);
     font-family: "DejaVu Sans Condensed", "Open Sans", sans-serif;
     font-size: 11px;
     line-height: 14px;

     .titlebar {
          height: 25px;
          padding-left: 3px;
          color: #999;
     }

     h1 {
          font-family: "Open Sans", sans-serif;
     }

     .titleIcon {
          margin-right: 6px;
     }

     .caption button:disabled {
          color: #e2e2e2;
     }
}

.zTabs {
     display: flex;
     align-items: flex-end;
     gap: 2px;
     height: 24px;
     margin-top: 1px;
     padding-left: 4px;
}

.zTab {
     height: 18px;
     padding: 0px 4px 0px 5px;
     color: #333;
     border: 1px solid #fff;
     border-bottom: none;
     border-right: 2px solid #777;

     &.active {
          width: 44px;
          height: 21px;
          color: #0000ff;
     }
}

.zPage {
     flex: 1;
     margin: 0px 3px 0px 4px;
     padding: 0px 3px 0px 4px;
     border-top: 1px solid #fff;
     border-right: 1px solid #777;

     fieldset {
          border: 1px solid #a0a0a0;
          box-shadow: 1px 1px 0px #fff, inset 1px 1px 0px #fff;
          min-width: 0px;
     }

     legend {
          margin-left: 5px;
          padding: 0px 2px;
     }
}

.row {
     display: flex;
     height: 18px;
}

.name {
     text-align: right;
     white-space: nowrap;
     padding: 1px 7px 0px 0px;

     &.off {
          color: #a0a0a0;
          text-shadow: 1px 1px 0px #fff;
     }
}

.processor .row > .name:first-child {
     width: 160px;
}

.processor .left {
     width: 119px;
     padding-left: 8px;
     text-align: left;
}

.name.grow, .field.grow {
     flex: 1;
}

.field {
     height: 16px;
     color: #00008b;
     text-align: center;
     white-space: nowrap;
     border: 1px solid #a0a0a0;
     border-right-color: #fff;
     border-bottom-color: #fff;
}

.processor {
     height: 183px;
     padding-right: 5px;

     .mid { width: 109px; }
     .tdp { width: 46px; }
     .vid { width: 71px; }
     .num { width: 53px; }
     .tall {
          height: 29px;
          padding-left: 2px;
          text-align: left;
     }
}

.model {
     display: flex;
     height: 80px;
     margin-right: -5px;

     .modelRows {
          flex: 1;
          padding-top: 1px;
     }

     .row:first-child {
          height: 20px;
     }
}

.intel {
     width: 93px;
     height: 70px;
     margin-left: 7px;

     text {
          fill: #fff;
     }
}

.intelName {
     font: 700 17px "Open Sans", sans-serif;
}

.intelInside {
     font: italic 600 11px "Open Sans", sans-serif;
}

.intelCore {
     font: 600 15px "Open Sans", sans-serif;
}

.halves {
     display: flex;
     gap: 5px;
     margin-top: 3px;

     fieldset {
          height: 96px;
          padding-top: 3px;
     }

     .name {
          padding-right: 4px;
     }
}

.clocks {
     width: 223px;
     padding-right: 2px;

     .field { width: 85px; }
}

.cache {
     flex: 1;
     padding-right: 6px;

     .size { width: 94px; }
     .way { width: 51px; margin-left: 2px; }
}

.footerBox {
     height: 40px;
     margin-top: 4px;
}

/* task manager */
.taskmgr {
     left: 795px;
     right: 2px;
     top: 341px;
     bottom: 0px;
     background-color: #fff;
     border: 1px solid #999;
     border-right: none;
     border-bottom: none;
     box-shadow: 0px 0px 14px rgba(0, 0, 0, 0.4);

     .titlebar {
          height: 30px;
          padding-left: 8px;
          color: #999;
     }

     .tabs {
          height: 23px;
          padding-left: 2px;
          margin-top: 2px;
          border-bottom: 1px solid #d9d9d9;
     }

     .tab {
          padding-left: 3px;
          padding-right: 3px;
     }
}

.menu {
     display: flex;
     gap: 12px;
     padding: 2px 0px 1px 7px;
     height: 21px;
     color: #777;
     border-bottom: 2px solid #f0f0f0;
}

.perf {
     flex: 1;
     display: flex;
     padding: 11px 26px 5px 4px;
     min-height: 0px;
}

.devices {
     flex: none;
     width: 204px;
}

.device {
     display: flex;
     width: 100%;
     height: 60px;
     padding: 10px 0px 0px 10px;
     gap: 10px;
     text-align: left;

     &.selected {
          background-color: #d8d8d8;
     }

     svg {
          flex: none;
          width: 60px;
          height: 40px;
     }

     span {
          margin-top: -2px;
     }

     b {
          display: block;
          font-size: 15px;
          font-weight: 400;
          line-height: 16px;
     }

     small {
          display: block;
          font-size: 12px;
          line-height: 20px;
     }

     i {
          font-style: normal;
     }

     .gray, i {
          color: #777;
     }
}

.details {
     flex: 1;
     margin: 10px 0px 0px 3px;
     padding-left: 28px;
     border-left: 1px solid #d9d9d9;
}

.detailsHead {
     display: flex;
     justify-content: space-between;
     align-items: baseline;
     height: 35px;
     margin: 0px -2px 0px -3px;

     h2 {
          font-size: 28px;
          font-weight: 400;
          line-height: 26px;
     }

     p {
          font-size: 15px;
          line-height: 20px;
          white-space: nowrap;
     }
}

.axis {
     display: flex;
     justify-content: space-between;
     height: 17px;
     font-size: 11px;
     color: #777;
}

.cores {
     display: grid;
     grid-template-columns: repeat(4, 1fr);
     gap: 4px;
}

.core {
     height: 107px;
     border: 1px solid #117dbb;
     background:
          linear-gradient(#117dbb, #117dbb) 0px 10px / 100% 1px no-repeat,
          repeating-linear-gradient(90deg, transparent 0px 19px, #d0e3ef 19px 20px, transparent 20px 22px),
          linear-gradient(#fff, #fff) 0px 0px / 100% 10px no-repeat,
          repeating-linear-gradient(#f0f6fa 0px 10px, #cde2ef 10px 11px);
}

.stats {
     display: flex;
     margin: 25px 0px 0px -2px;
}

.bigStats {
     width: 228px;
}

.statLine {
     display: grid;
     height: 51px;

     &.two {
          grid-template-columns: 106px auto;
     }

     &.three {
          grid-template-columns: 77px 64px auto;
     }

     span {
          display: block;
          color: #777;
     }

     strong {
          display: block;
          font-size: 19px;
          font-weight: 400;
          line-height: 30px;
          white-space: nowrap;
     }
}

dl {
     display: grid;
     grid-template-columns: 157px auto;
     grid-auto-rows: 18px;
     white-space: nowrap;

     dt {
          color: #777;
     }
}

/* taskbar */
.taskbar {
     position: absolute;
     left: 0px;
     bottom: 0px;
     display: flex;
     width: 795px;
     height: 40px;
     background-color: #0b0805;

     button {
          display: flex;
          align-items: center;
          justify-content: center;
          width: 49px;
          height: 40px;
          background: no-repeat center bottom / 40px 2px;
     }

     .narrow {
          width: 48px;
     }

     .open {
          background-image: linear-gradient(#5cb860, #5cb860);
     }

     .current {
          width: 48px;
          background-color: #3d3b39;
          background-size: 100% 2px;
     }

     svg {
          width: 24px;
          height: 24px;
     }
}

.badge64 {
     font: 700 16px "Open Sans", sans-serif;
     fill: #fff;
}
```
